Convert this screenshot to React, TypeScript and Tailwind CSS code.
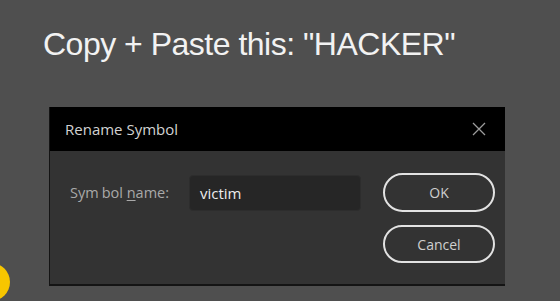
export default function App() {
  return (
    <div className="relative w-[560px] h-[301px] overflow-hidden bg-[#4f4f4f] font-['Liberation_Sans',Arial,sans-serif]">
      <h1 className="pt-[28px] pl-[43px] text-[32px] leading-[32px] text-[#f2f2f2] tracking-[-0.5px]">
        Copy + Paste this: "HACKER"
      </h1>

      {/* dialog */}
      <div className="mt-[47px] ml-[49px] w-[456px] h-[179px] flex flex-col bg-[#333333] border-l border-b-2 border-[#141414] font-['Open_Sans','Noto_Sans',sans-serif]">
        <div className="h-[44px] shrink-0 bg-black flex items-center justify-between pl-[15px] pr-[19px]">
          <span className="text-[15px] leading-[20px] text-[#d2d2d2]">Rename Symbol</span>
          <svg width="14" height="14" viewBox="0 0 14 14" fill="none" stroke="#9c9c9c" strokeWidth="1.3">
            <path d="M1 1L13 13M13 1L1 13" />
          </svg>
        </div>
        <div className="flex flex-1 pt-[22px] pl-[20px] pr-[10px]">
          <div className="flex items-start flex-1">
            <div className="flex items-center mt-[2px] h-[36px]">
              <span className="w-[119px] text-[14.5px] text-[#a9a9a9]">
                <span className="pr-[3px]">Sym</span>bol <span className="underline underline-offset-2">n</span>ame:
              </span>
              <div className="w-[172px] h-[36px] rounded-[4px] bg-[#262626] border border-[#2d2d2d] flex items-center pl-[10px]">
                <span className="text-[15px] text-[#ececec]">victim</span>
              </div>
            </div>
          </div>
          <div className="flex flex-col gap-[13px]">
            <button className="w-[112px] h-[39px] rounded-full border-2 border-[#e2e2e2] text-[14px] text-[#cfcfcf]">
              OK
            </button>
            <button className="w-[112px] h-[38px] rounded-full border-2 border-[#e2e2e2] text-[14px] text-[#cfcfcf]">
              Cancel
            </button>
          </div>
        </div>
      </div>

      <div className="absolute left-[-28px] top-[263px] w-[38px] h-[38px] rounded-full bg-[#f7c600]" />
    </div>
  );
}
